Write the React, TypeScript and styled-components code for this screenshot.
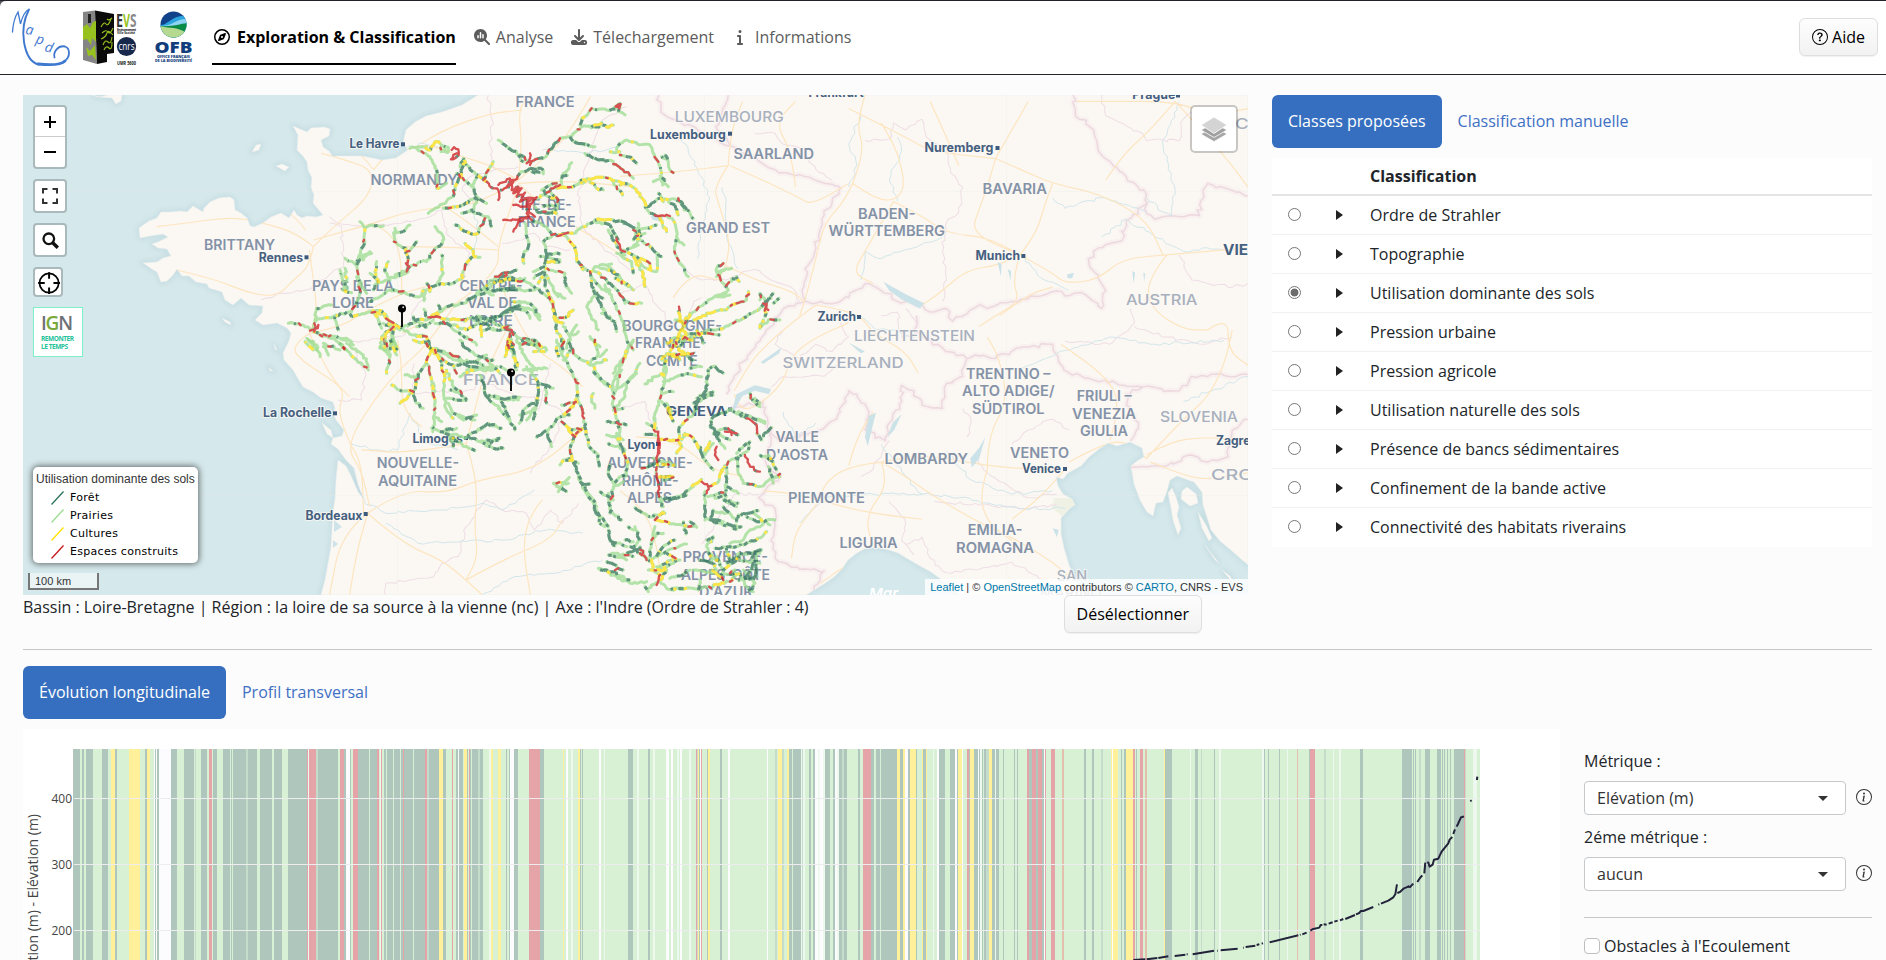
import React from "react";
import styled, { createGlobalStyle } from "styled-components";
import { FaRegCompass, FaMagnifyingGlassChart, FaDownload, FaInfo } from "react-icons/fa6";
import { BsQuestionCircle, BsInfoCircle } from "react-icons/bs";

const GlobalStyle = createGlobalStyle`
  * { box-sizing: border-box; }
  html, body { margin: 0; padding: 0; }
  body {
    height: 960px;
    overflow: hidden;
    background: #fcfcfc;
    color: #212529;
    font: 16px/24px "Open Sans", "Noto Sans", sans-serif;
  }
  svg { display: block; }
`;

/* ---------- page chrome ---------- */

const Page = styled.div`
  height: 960px;
  overflow: hidden;
`;

const Header = styled.header`
  display: flex;
  align-items: flex-start;
  height: 75px;
  padding-right: 8px;
  background: #fff;
  border-top: 1px solid #22222c;
  border-bottom: 1px solid #22262a;
`;

const Nav = styled.nav`
  display: flex;
  gap: 18px;
  margin-top: 18px;
`;

const NavItem = styled.a<{ $active?: boolean; $gap?: number }>`
  display: flex;
  align-items: center;
  gap: ${(p) => p.$gap ?? 7}px;
  height: 46px;
  padding: ${(p) => (p.$active ? "0 0 8px 2px" : "0 0 8px")};
  border-bottom: 2px solid ${(p) => (p.$active ? "#000" : "transparent")};
  color: ${(p) => (p.$active ? "#000" : "#5c5c5c")};
  font-weight: ${(p) => (p.$active ? 700 : 400)};
  letter-spacing: ${(p) => (p.$active ? "-0.02px" : "0")};
  white-space: nowrap;
`;

const Button = styled.button`
  display: flex;
  align-items: center;
  gap: 4px;
  height: 38px;
  padding: 0 12px;
  border: 1px solid #dedede;
  border-radius: 6px;
  background: linear-gradient(#fdfdfd, #f2f2f2);
  box-shadow: 0 1px 1px rgba(0, 0, 0, 0.06);
  color: #000;
  font: inherit;
  white-space: nowrap;
`;

const HelpButton = styled(Button)`
  margin: 17px 0 0 auto;
`;

const Content = styled.main`
  padding: 20px 14px 0 23px;
`;

const TopRow = styled.section`
  display: grid;
  grid-template-columns: 1225px 600px;
  column-gap: 24px;
`;

const SelectionRow = styled.div`
  display: flex;
  justify-content: space-between;
  height: 38px;
  padding-right: 46px;
`;

const Rule = styled.hr<{ $top: number; $bottom: number }>`
  height: 1px;
  margin: ${(p) => p.$top}px 0 ${(p) => p.$bottom}px;
  border: 0;
  background: #c6c7c7;
`;

const Tabs = styled.div`
  display: flex;
  height: 53px;
  margin-bottom: 10px;
`;

const Tab = styled.button<{ $active?: boolean }>`
  padding: 0 16px 2px;
  border: 0;
  border-radius: 6px;
  background: ${(p) => (p.$active ? "#366fc0" : "transparent")};
  color: ${(p) => (p.$active ? "#fff" : "#4070c4")};
  font: inherit;
  white-space: nowrap;
`;

/* ---------- classification table ---------- */

const Table = styled.div`
  background: #fff;
`;

const Row = styled.div<{ $head?: boolean }>`
  display: grid;
  grid-template-columns: 63px 35px 1fr;
  align-items: center;
  height: ${(p) => (p.$head ? 38 : 39)}px;
  padding-bottom: ${(p) => (p.$head ? 0 : 1)}px;
  border-bottom: ${(p) => (p.$head ? "2px solid #e4e4e4" : "1px solid #f1f1f1")};
  font-weight: ${(p) => (p.$head ? 700 : 400)};
  &:last-child { padding-bottom: 2px; border-bottom: 0; }
`;

const Radio = styled.span<{ $on: boolean }>`
  width: 13px;
  height: 13px;
  margin-left: 16px;
  border: 1px solid #767676;
  border-radius: 50%;
  background: ${(p) => (p.$on ? "radial-gradient(circle, #6c6c6c 0 3.6px, #fff 4.3px)" : "#fff")};
`;

const Expander = styled.span`
  width: 0;
  height: 0;
  margin-left: 1px;
  border: solid transparent;
  border-width: 5px 0 5px 7px;
  border-left-color: #222;
`;

/* ---------- map overlay ---------- */

const MapBox = styled.div`
  position: relative;
  height: 500px;
  overflow: hidden;
  background: #d5e8eb;
`;

const Controls = styled.div`
  position: absolute;
  left: 10px;
  top: 10px;
  display: flex;
  flex-direction: column;
  align-items: flex-start;
  gap: 10px;
`;

const Bar = styled.div<{ $w?: number }>`
  width: ${(p) => p.$w ?? 34}px;
  border: 2px solid rgba(0, 0, 0, 0.2);
  border-radius: 4px;
  background: #fff;
  background-clip: padding-box;
`;

const ControlButton = styled.div<{ $h?: number; $line?: boolean }>`
  display: flex;
  align-items: center;
  justify-content: center;
  height: ${(p) => p.$h ?? 30}px;
  border-bottom: ${(p) => (p.$line ? "1px solid #ccc" : "0")};
`;

const Ign = styled.div`
  display: flex;
  flex-direction: column;
  justify-content: center;
  width: 50px;
  height: 50px;
  padding-left: 7px;
  border: 1px solid #7df0c5;
  background: #fff;
  color: #25c39a;
  font: 700 6.5px/8px "Open Sans", sans-serif;
  letter-spacing: -0.45px;
  white-space: nowrap;
`;

const IgnName = styled.span`
  margin-bottom: 2px;
  color: #6d7276;
  font: 600 19px/20px "Open Sans", sans-serif;
  letter-spacing: -1.2px;
  i { color: #78a83a; font-style: normal; }
`;

const Layers = styled.div`
  position: absolute;
  right: 10px;
  top: 10px;
  display: flex;
  align-items: center;
  justify-content: center;
  width: 48px;
  height: 48px;
  border: 2px solid rgba(0, 0, 0, 0.2);
  border-radius: 5px;
  background: #fff;
  background-clip: padding-box;
`;

const Legend = styled.div`
  position: absolute;
  left: 10px;
  top: 372px;
  width: 165px;
  height: 96px;
  padding: 3px 3px;
  border-radius: 5px;
  background: #fff;
  box-shadow: 0 0 6px 1px rgba(0, 0, 0, 0.55);
  color: #333;
  font: 12px/19px "Liberation Sans", sans-serif;
  white-space: nowrap;
`;

const LegendItem = styled.div`
  display: flex;
  align-items: center;
  gap: 6px;
  padding-left: 15px;
  color: #000;
  font: 11px/18px "DejaVu Sans", sans-serif;
  letter-spacing: 0.3px;
`;

const ScaleBar = styled.div`
  position: absolute;
  left: 5px;
  bottom: 5px;
  width: 71px;
  height: 17px;
  padding-left: 5px;
  border: 2px solid #777;
  border-top: 0;
  background: rgba(255, 255, 255, 0.5);
  color: #333;
  font: 11px/16px "Liberation Sans", sans-serif;
`;

const Attribution = styled.div`
  position: absolute;
  right: 0;
  bottom: 0;
  height: 16px;
  padding: 0 5px;
  background: rgba(255, 255, 255, 0.8);
  color: #333;
  font: 11px/16px "Liberation Sans", sans-serif;
  white-space: nowrap;
  a { color: #0078a8; }
`;

/* ---------- lower section ---------- */

const BottomRow = styled.section`
  display: grid;
  grid-template-columns: 1537px 288px;
  column-gap: 24px;
`;

const ChartPanel = styled.div`
  height: 400px;
  background: #fff;
`;

const Side = styled.div`
  padding-top: 20px;
`;

const FieldLabel = styled.div`
  height: 24px;
  margin-bottom: 8px;
`;

const Field = styled.div`
  display: flex;
  align-items: center;
  justify-content: space-between;
  margin-bottom: 10px;
  color: #333;
  > svg { margin-bottom: 2px; }
`;

const Select = styled.div`
  display: flex;
  align-items: center;
  justify-content: space-between;
  width: 262px;
  height: 34px;
  padding: 0 17px 0 12px;
  border: 1px solid #c6c9cc;
  border-radius: 4px;
  background: #fff;
  &::after {
    content: "";
    border: solid transparent;
    border-width: 5px 5px 0;
    border-top-color: #333;
  }
`;

const CheckRow = styled.div`
  display: flex;
  align-items: center;
  gap: 4px;
`;

const Check = styled.span`
  width: 16px;
  height: 16px;
  border: 1px solid #bfbfbf;
  border-radius: 4px;
  background: #fff;
`;

/* ---------- river network ---------- */

type Net = [string, string];

const NORTH: Net[] = [
  ["g", "390,175 440,170"], ["y", "435,172 452,180 465,155 480,160"], ["g", "485,165 483,185 503,188 505,172 492,168 497,185"],
  ["r", "515,180 522,172 535,178 536,195 525,205 513,208 520,195 530,190"], ["g", "410,175 450,200 470,240 470,290"],
  ["m", "540,230 550,205 560,225 590,255 620,275"], ["r", "620,275 640,295 655,300 655,330"],
  ["m", "550,205 545,250 525,290 520,320"], ["g", "520,320 480,345 445,370"], ["g", "470,295 500,280"], ["m", "530,250 580,290 590,320 620,340"],
  ["m", "490,355 550,345 590,320"], ["m", "545,370 580,360 595,325"], ["d", "570,365 605,375 625,380 635,410"],
  ["s", "615,385 595,430 570,430"], ["m", "570,430 525,405"], ["m", "610,270 625,240 640,215"], ["m", "590,260 575,290"],
  ["m", "655,150 690,175"], ["s", "685,175 720,195 750,215"], ["d", "715,195 730,215"], ["r", "750,190 750,225"], ["r", "740,220 765,210"],
  ["r", "720,250 705,270 690,275"], ["d", "720,250 750,235 785,235 790,252"], ["d", "755,245 780,248"],
  ["s", "750,215 790,205 820,170 840,145"], ["g", "840,145 870,140 905,110 960,110"], ["y", "935,112 965,98 980,112 1000,105"],
  ["s", "900,105 905,85 915,80"], ["g", "915,80 935,55 980,60 1020,50"], ["s", "1000,55 1022,42 1015,65"], ["g", "1015,60 1035,75"],
  ["d", "870,140 890,160 945,170"], ["d", "885,155 915,165"],
  ["r", "655,285 690,265 680,290 700,275 695,300 715,290 700,310 725,295 710,320 735,308 720,335 745,325 745,345"],
  ["r", "660,300 690,290"], ["s", "755,330 790,315 820,295 840,285"], ["r", "735,325 770,322 750,345"], ["r", "755,325 740,350 755,340"],
  ["r", "700,345 730,350 750,350 740,370 755,390"], ["r", "740,355 765,380"], ["r", "670,390 740,385"], ["r", "700,425 715,395 740,380"],
  ["d", "765,350 770,365 800,370 830,360"], ["m", "830,360 835,330 810,305"], ["d", "790,350 830,345"], ["m", "790,365 830,370"],
  ["m", "785,300 830,280"], ["y", "830,295 880,290"], ["m", "880,290 920,270"], ["y", "900,272 960,262 1020,275 1050,285 1080,310 1100,350"],
  ["m", "790,300 805,320 835,330"], ["d", "840,285 850,250 863,240 875,218"], ["d", "845,258 862,256"],
  ["m", "930,275 950,295 970,300"], ["m", "1000,275 1010,290 1028,315"], ["y", "1020,285 1035,280"],
  ["d", "1095,350 1110,370 1130,378"], ["d", "1100,350 1140,325"], ["m", "1140,325 1190,330 1215,355"], ["g", "1205,345 1240,385"],
  ["r", "1125,376 1170,378"], ["g", "1160,375 1185,400 1190,440 1185,490 1210,530 1225,560"], ["m", "1165,335 1185,345 1195,375"],
  ["y", "1140,380 1160,425"], ["g", "1190,440 1212,465"], ["m", "1135,310 1150,335"], ["s", "1195,325 1220,360"],
  ["d", "915,190 940,205 1000,215"], ["s", "1000,222 1030,240 1060,265"], ["m", "990,185 1020,185"], ["s", "1020,195 1050,200 1070,220"],
  ["m", "1010,180 1020,160 1040,150 1070,158"], ["g", "1070,160 1110,165 1120,190 1135,215 1145,250 1145,275 1165,290"],
  ["g", "1145,200 1165,215 1170,240 1180,248"], ["m", "1155,195 1165,215"], ["g", "1120,275 1145,265"], ["d", "1140,258 1155,270 1148,285"],
  ["d", "755,390 800,410 815,435"], ["r", "815,435 845,435"], ["m", "845,432 880,430 910,410 950,390"], ["y", "950,390 1000,390"], ["d", "1000,390 1040,400"],
  ["d", "950,398 990,405 1015,450"], ["d", "1030,400 1070,415 1065,445"], ["m", "1060,420 1080,430 1060,450"],
  ["g", "1075,420 1110,415 1130,405"], ["m", "1065,440 1110,470 1145,500"], ["g", "1060,470 1078,445"], ["m", "1075,400 1080,440 1095,430"],
  ["r", "1010,445 1022,480 1035,485"], ["m", "1030,480 1070,500 1090,530 1125,545"], ["g", "1040,480 1075,465"], ["m", "1010,490 1055,515 1060,550"],
  ["y", "1060,500 1090,550 1095,590"], ["g", "1130,490 1130,545"], ["y", "1080,505 1110,520 1112,540"], ["m", "985,420 1010,470 1035,495"],
  ["y", "835,435 860,440 885,470 890,510 910,540"], ["s", "890,515 925,542"], ["g", "930,545 960,525 995,522"], ["m", "960,535 990,540 1020,560 1025,580"],
  ["m", "1005,565 1040,580 1060,600"], ["g", "985,530 1005,550 1045,590"], ["s", "930,545 935,590 942,605"], ["d", "940,600 955,630 975,670"],
  ["d", "970,655 985,685 1005,695 1010,725"], ["d", "965,670 990,680"], ["m", "945,545 980,570 1010,600 1030,625 1035,640"], ["m", "1020,615 1050,640 1085,640"],
  ["g", "975,585 995,615 1010,650"], ["g", "935,560 960,590 980,605"], ["d", "940,605 970,625"], ["g", "940,620 920,650 940,690 955,720"],
  ["d", "820,435 790,455 800,490 795,530"], ["m", "795,535 830,545 855,550"], ["d", "855,550 858,590 875,610"], ["d", "800,495 840,492"],
  ["m", "800,515 840,515"], ["d", "795,530 760,545"], ["d", "790,545 762,565"], ["d", "795,545 795,590"], ["m", "800,555 820,600 835,620"],
  ["g", "820,600 855,625"], ["d", "780,500 840,510"], ["d", "735,400 740,440 745,470 732,490 728,505"], ["y", "730,505 732,520"], ["m", "790,560 775,580"],
  ["g", "240,395 255,415 250,455"], ["m", "255,455 230,515"], ["g", "230,515 235,560 240,610"], ["g", "255,415 275,405 310,408"], ["g", "195,505 230,525 250,495 275,490"],
  ["g", "195,535 200,575 188,600 215,608"], ["g", "270,485 250,510"], ["g", "345,415 342,455 355,465 378,475"], ["y", "378,475 385,530"],
  ["r", "378,520 388,530 380,545 385,530"], ["g", "385,535 420,515 440,515 455,490"], ["s", "455,490 485,460"], ["g", "488,460 490,440 475,425 465,410"],
  ["g", "345,430 370,425 390,405"], ["g", "385,545 350,560 320,570 290,580 280,600"], ["m", "290,515 285,545 295,580"], ["g", "325,515 315,545 330,570"],
  ["g", "410,455 395,475 380,485"], ["g", "380,540 345,555"], ["g", "270,550 290,570"], ["g", "230,560 260,610"], ["g", "180,540 200,600"],
  ["g", "485,495 490,550 470,585 440,600"], ["g", "430,600 420,620 380,612 330,600 300,620 270,635"], ["s", "330,600 375,608"],
  ["m", "440,600 470,585 520,580 550,560"], ["m", "545,560 560,520 580,500"], ["y", "580,500 580,480 555,460"], ["m", "580,500 600,502"],
  ["s", "440,580 450,605"], ["g", "435,600 432,632"], ["g", "240,610 230,635 215,665"],
  ["g", "25,700 70,705 100,720"], ["r", "90,722 108,718 103,700"], ["g", "100,715 110,690 160,680 210,665 215,680 270,665"], ["r", "103,725 115,705"],
  ["g", "105,690 110,655 155,645"], ["y", "275,663 305,662 325,690 345,708"], ["y", "275,668 310,672 330,695 350,712"], ["m", "345,705 360,715 400,700"],
  ["m", "400,690 440,690"], ["r", "445,682 480,682"], ["y", "470,680 510,690 560,690"], ["m", "545,690 600,680 640,700 690,715"], ["d", "385,705 410,690 440,712"],
  ["d", "410,710 440,705 460,690"], ["d", "400,680 415,695"], ["d", "432,658 438,680"], ["m", "440,690 480,660 475,645"], ["m", "465,680 500,650 550,640 600,610"],
  ["m", "590,610 640,570 680,555 720,570"], ["s", "645,560 710,540"], ["m", "640,580 680,565 720,575 735,565"], ["m", "720,565 750,580 790,610 810,625"],
  ["m", "810,620 825,680 830,720 850,760"], ["y", "800,600 820,640 825,690 850,700"], ["y", "825,690 860,680 880,660"], ["d", "630,605 700,590 730,602 765,600"],
  ["d", "600,615 640,600 680,602 720,595"], ["m", "610,600 650,575 700,570"], ["d", "580,690 650,680 700,660 720,640"], ["g", "700,635 750,640 780,680"],
  ["d", "680,660 700,655 740,665 750,685"], ["d", "690,660 720,645"], ["g", "720,650 760,660 780,690"], ["d", "640,690 700,650"], ["d", "560,630 620,605 640,615"],
  ["y", "345,705 315,735 315,780"], ["m", "340,715 305,740 300,775"], ["m", "325,700 340,745 350,780"], ["m", "345,715 330,780"],
  ["g", "100,725 160,745 200,780"], ["m", "80,745 95,755 110,780"], ["g", "120,735 200,745 220,765"], ["g", "170,740 215,755"], ["g", "165,680 175,720"], ["g", "285,670 300,705"],
  ["g", "295,690 305,715"], ["m", "310,700 360,720"], ["g", "360,715 400,735 440,740"], ["y", "410,740 440,740 455,780"], ["d", "465,700 500,700 530,725 560,745"],
  ["m", "490,695 560,720 600,700"], ["d", "600,690 640,720 690,720"], ["m", "600,720 640,715"], ["g", "560,740 590,765"], ["y", "600,700 605,740"],
  ["r", "680,718 695,720 700,735"], ["m", "690,720 700,780"], ["d", "690,720 720,745 735,760"], ["s", "730,745 770,755"], ["m", "720,760 780,765"],
  ["y", "690,730 680,780"], ["g", "890,705 870,740 860,775"], ["g", "880,735 895,725"], ["g", "930,740 960,770"], ["g", "850,710 870,740"],
  ["r", "1197,650 1197,668"], ["y", "1195,665 1200,690 1215,710 1195,735 1185,770"], ["y", "1185,690 1215,700 1230,670"], ["y", "1200,720 1220,730 1205,750"],
  ["g", "1215,690 1250,660 1285,630 1330,610"], ["g", "1330,615 1345,600 1325,575 1315,555 1330,540"], ["g", "1310,560 1310,535 1330,520"], ["g", "1315,545 1355,535"],
  ["m", "1335,590 1370,560 1378,575"], ["g", "1310,620 1350,615"], ["m", "1190,755 1240,740 1290,720 1330,715"], ["m", "1330,715 1400,680 1450,650"], ["d", "1445,650 1480,610"],
  ["y", "1240,690 1290,670 1330,660 1370,640"], ["m", "1370,640 1400,630 1405,605"], ["s", "1440,615 1460,640 1455,680"], ["r", "1450,640 1465,660"], ["m", "1450,690 1440,715"],
  ["g", "1500,690 1465,690 1440,710"], ["d", "1480,640 1497,625"], ["s", "1440,630 1440,610"], ["g", "1030,700 1040,745 1060,780"], ["m", "1215,735 1280,730 1320,735"],
  ["y", "1160,760 1200,735 1240,750"], ["g", "1005,640 1025,690 1035,720"], ["y", "1250,720 1270,760"],
];

const SOUTH: Net[] = [
  ["m", "440,60 435,75 410,110"], ["s", "415,100 400,160"], ["d", "375,105 415,112"], ["m", "335,135 360,150 400,155"], ["y", "360,190 400,158"],
  ["d", "400,160 410,190 430,205"], ["y", "400,0 440,10 455,30 440,60"], ["m", "440,60 455,120 465,180"], ["g", "460,130 465,220 458,275"], ["d", "460,230 485,245"],
  ["y", "455,25 480,60 495,110"], ["m", "465,30 490,60 520,75 530,100"], ["g", "495,100 490,150 500,210 520,235"], ["d", "505,190 520,220 550,240 590,225"],
  ["g", "500,90 520,140 545,160"], ["d", "510,150 545,165 560,180"], ["d", "500,175 560,180"], ["d", "530,225 585,240"], ["m", "460,30 510,40 560,65"],
  ["g", "465,25 530,60 600,70"], ["d", "530,75 580,65 620,45"], ["d", "540,70 600,85"], ["d", "560,60 610,75"], ["g", "560,90 600,85 650,80"], ["d", "540,0 560,25 600,50 640,60"],
  ["g", "620,60 660,100"], ["g", "540,110 570,90 640,90"], ["g", "455,265 500,280 530,300"], ["d", "480,275 530,265"], ["g", "500,265 520,320"], ["g", "510,295 560,320 585,332"],
  ["d", "555,295 600,265 620,255 665,265"], ["d", "565,290 600,305 640,325 670,325"], ["d", "600,305 660,295"], ["d", "620,310 655,300"], ["m", "495,280 560,292"], ["d", "600,270 625,250 650,260"],
  ["d", "600,105 620,170 640,190 660,205"], ["d", "625,165 660,175 690,240"], ["d", "655,205 690,240 705,270"], ["g", "630,170 715,180"], ["d", "660,175 720,172"],
  ["m", "690,0 690,20 700,40 710,90"], ["y", "690,10 675,50"], ["m", "690,10 705,50 712,80"], ["g", "710,0 740,60 770,90"], ["g", "740,80 775,130"], ["s", "775,130 772,185"],
  ["d", "772,185 760,240"], ["g", "740,0 790,35"], ["m", "760,0 800,30"], ["y", "760,35 795,35"], ["g", "730,90 800,85"], ["d", "775,130 820,145"], ["g", "800,135 800,190"],
  ["d", "775,180 730,210 718,250"], ["g", "770,190 740,240"], ["g", "720,225 750,215"], ["g", "660,80 700,95"],
  ["d", "865,80 890,120"], ["r", "885,118 895,130"], ["m", "892,130 890,170 910,220"], ["r", "908,218 912,235"], ["m", "912,235 918,270 925,310"], ["d", "925,315 955,345 958,380"],
  ["g", "830,0 850,50 868,82"], ["m", "850,0 845,40"], ["m", "835,50 830,20"], ["m", "870,30 850,60"], ["m", "865,0 880,40"], ["g", "875,35 905,60 935,75 960,120 1000,145"],
  ["m", "940,95 965,120 1000,145"], ["g", "1000,145 1005,110 1020,80"], ["y", "895,170 880,200 850,225"], ["d", "870,225 840,232 805,270 770,292"], ["m", "845,195 895,185"],
  ["d", "800,275 815,320"], ["y", "845,245 880,270 910,265"], ["y", "865,265 885,290 905,265"], ["m", "885,285 870,330 880,365"], ["s", "840,375 850,360 875,360"], ["d", "865,355 895,370"],
  ["d", "880,365 905,430 940,480 960,530 985,560"], ["g", "895,410 925,470 950,500"], ["d", "940,490 960,550 975,560"], ["d", "985,570 990,600 1040,620"], ["g", "820,430 865,430"],
  ["g", "835,455 850,430 868,412"], ["d", "830,440 860,455"], ["d", "905,430 930,432"], ["g", "820,430 850,450"],
  ["g", "1000,145 1000,200 1015,250 1020,290"], ["m", "1010,280 1030,340"], ["g", "1030,330 1045,370 1035,410"], ["g", "1005,205 1035,170 1040,130 1070,100"], ["g", "1000,160 1050,120 1080,70"],
  ["g", "1060,0 1040,30 1020,80"], ["g", "1060,0 1040,40 1000,100"], ["s", "980,245 1040,255"], ["g", "980,285 1030,300"], ["g", "985,310 1035,330"], ["g", "940,160 935,180 945,205"],
  ["g", "945,0 955,40 930,70"], ["g", "930,75 980,60"], ["g", "960,50 980,30"], ["g", "1000,210 1030,205"], ["g", "1010,140 1025,90"], ["d", "1015,245 1020,270"],
  ["d", "1035,405 1000,430 985,400 990,375"], ["g", "1030,425 1000,440 990,510"], ["d", "990,510 1025,540"], ["d", "960,455 1000,480"], ["d", "985,460 990,520"],
  ["m", "1160,60 1150,110"], ["g", "1145,50 1160,90 1145,160 1130,210 1122,240"], ["y", "1125,235 1122,270"], ["g", "1145,160 1180,155"], ["g", "1150,125 1220,100 1265,110"], ["g", "1150,100 1125,110 1095,132"],
  ["y", "1160,190 1180,245"], ["g", "1145,185 1175,215"], ["y", "1145,60 1160,40 1190,45 1240,40"], ["y", "1180,10 1170,40 1200,60"], ["g", "1230,85 1265,80"], ["m", "1215,0 1195,30 1240,60"],
  ["r", "1122,270 1135,275 1140,310 1130,360"], ["r", "1135,295 1138,340"], ["m", "1130,360 1128,400"], ["r", "1130,400 1138,470"], ["m", "1138,470 1145,500"], ["y", "1150,515 1125,540"],
  ["y", "1140,298 1195,300 1205,320 1190,340"], ["y", "1205,300 1215,280"], ["m", "1210,285 1235,290 1260,330"], ["d", "1260,320 1270,355 1300,390"], ["m", "1195,300 1200,260 1240,220"],
  ["d", "1240,220 1250,190 1280,150 1280,110"], ["d", "1250,210 1260,165"], ["d", "1280,120 1290,85 1305,78"], ["d", "1305,80 1330,100"], ["d", "1240,190 1300,165"], ["d", "1250,175 1300,155"],
  ["d", "1300,230 1290,260 1320,280"], ["d", "1300,280 1340,265 1375,285"], ["r", "1335,275 1370,280"], ["d", "1310,280 1350,300"], ["r", "1345,265 1355,285"], ["d", "1300,230 1355,208 1400,235"],
  ["r", "1400,235 1430,255 1432,280"], ["d", "1375,215 1455,250"], ["d", "1425,235 1455,245"], ["s", "1410,160 1412,175"], ["d", "1410,172 1440,200"], ["d", "1425,175 1440,190"], ["d", "1430,280 1445,300"],
  ["d", "1450,290 1475,262"], ["d", "1300,280 1335,325"], ["y", "1270,340 1290,305"], ["r", "1310,320 1305,345 1315,360"], ["m", "1275,345 1300,310"], ["d", "1370,340 1400,310"],
  ["d", "1165,478 1200,470 1240,440"], ["y", "1235,440 1265,418"], ["r", "1265,425 1285,440 1280,460"], ["y", "1285,440 1310,430 1330,385"], ["m", "1325,390 1345,365 1385,345"],
  ["m", "1385,345 1400,335 1410,305"], ["d", "1275,455 1275,540"], ["d", "1340,380 1340,430 1335,480 1370,500"], ["d", "1330,480 1375,490"], ["d", "1340,440 1375,460"], ["g", "1375,350 1375,400 1390,430"],
  ["s", "1390,430 1440,440"], ["g", "1440,440 1460,425 1500,402"], ["r", "1395,345 1410,380 1440,395"], ["d", "1440,345 1480,365"], ["m", "1465,345 1490,390"], ["g", "1465,380 1480,430"], ["g", "1480,415 1500,410"],
  ["m", "1285,470 1330,458"], ["d", "1305,475 1330,462"], ["g", "1120,355 1175,372"], ["y", "1145,372 1185,375"], ["y", "1135,412 1180,410"], ["s", "1150,420 1180,412"], ["s", "1085,385 1130,370"], ["d", "1095,283 1130,288"],
  ["g", "1100,250 1130,265"], ["g", "1135,460 1150,500"], ["d", "1140,480 1220,465"],
  ["d", "1300,510 1290,540 1330,555 1385,560"], ["d", "1280,535 1330,545"], ["g", "1300,515 1350,520 1370,540"], ["d", "1370,545 1375,525 1435,512"], ["d", "1330,500 1350,520"], ["d", "1400,530 1440,545"],
  ["g", "1410,570 1440,560 1460,540 1485,540"], ["d", "1340,550 1370,568"], ["g", "1420,520 1470,555"],
  ["y", "1125,540 1170,550"], ["m", "1170,552 1240,560"], ["d", "1210,545 1218,582"], ["d", "1230,545 1250,562"], ["d", "1065,503 1110,530"], ["y", "1140,525 1155,520"], ["g", "1110,530 1130,525"],
  ["m", "1125,560 1115,600 1110,650"], ["y", "1110,650 1120,690 1140,705"], ["r", "1140,705 1130,735"], ["g", "1135,725 1105,745"], ["m", "1115,610 1130,580 1150,580"], ["m", "1130,650 1150,620"],
  ["m", "1150,620 1185,600"], ["g", "1120,655 1165,630 1220,612"], ["m", "1130,680 1180,658"], ["g", "1135,690 1200,660"], ["g", "1140,725 1165,748 1260,745 1300,740"], ["m", "1165,748 1240,745"],
  ["m", "1140,720 1160,690"], ["d", "1170,715 1215,700 1230,690"], ["m", "1100,660 1080,640"], ["y", "1105,690 1160,690"], ["y", "1160,640 1190,660"], ["s", "1080,620 1100,660"],
  ["d", "1065,560 1080,600 1060,620"], ["d", "1035,600 1060,605"], ["d", "1050,620 1080,640 1110,665"], ["d", "990,600 1005,618"], ["d", "1045,560 1060,570"], ["d", "985,645 1040,660"],
  ["d", "955,685 1000,695 1050,720"], ["g", "960,685 1010,710 1050,730 1100,725"], ["r", "1005,690 1015,685"], ["d", "980,665 1030,690"], ["g", "995,640 1060,650"], ["d", "1095,740 1105,755"], ["d", "1040,640 1080,625"],
  ["m", "1300,590 1280,620 1295,660 1310,690"], ["d", "1305,625 1370,620 1430,600"], ["g", "1430,600 1460,575"], ["d", "1400,640 1445,630"], ["y", "1300,735 1350,725 1370,700"],
  ["m", "1290,640 1320,670"], ["d", "1310,650 1330,690 1320,710"], ["m", "1330,690 1370,660 1380,640"], ["d", "1340,670 1380,640 1440,640"], ["d", "1260,660 1300,670"], ["m", "1320,705 1380,700"],
  ["d", "1380,700 1400,740 1420,755"], ["d", "1420,640 1415,690 1390,720"], ["g", "1350,610 1390,600 1410,570"], ["g", "1240,690 1300,700"], ["s", "1350,700 1365,690"], ["d", "1430,640 1430,690 1415,750"],
  ["d", "1380,660 1440,670"], ["d", "1375,720 1430,710"], ["y", "1295,690 1330,720"], ["d", "1280,600 1300,595"], ["d", "1260,720 1255,750"], ["m", "1340,625 1350,660"], ["d", "1390,690 1425,730"],
  ["g", "85,0 110,15 120,50"], ["m", "75,5 100,30"], ["g", "130,10 180,30"], ["g", "180,10 200,30 230,60 265,90"], ["g", "200,10 250,45 265,80"], ["m", "320,10 330,50 320,100"], ["m", "300,20 325,45"],
  ["y", "315,0 320,15"], ["m", "330,0 350,45"], ["g", "130,20 145,45"], ["d", "340,0 350,30"],
];

const MIX: Record<string, string> = {
  g: "gggggggggggdgggyggggdggrg",
  d: "ddgdgddgdgg",
  y: "yyyygyydyygyr",
  r: "rrrrrrrrrrdr",
  m: "ggdgygdgrygdgygd",
  s: "drdgrdgdy",
};
const TONE: Record<string, string> = { d: "#2d7358", g: "#9bdd90", y: "#ffdf10", r: "#cb181d" };

// Splits every reach into short sections, each with its dominant land use.
function sections(net: Net[], seed: number) {
  let s = seed;
  const rnd = () => {
    s = (s + 0x6d2b79f5) | 0;
    let t = Math.imul(s ^ (s >>> 15), 1 | s);
    t = (t + Math.imul(t ^ (t >>> 7), 61 | t)) ^ t;
    return ((t ^ (t >>> 14)) >>> 0) / 4294967296;
  };
  const out: Record<string, string> = { course: "", d: "", y: "", r: "", g: "" };
  for (const [mix, text] of net) {
    const pts = text.trim().split(/\s+/).map((p) => p.split(",").map(Number));
    let [px, py] = pts[0];
    if (mix !== "r") out.course += `M${px} ${py}`;
    for (let i = 1; i < pts.length; i++) {
      const [ax, ay] = pts[i - 1];
      const [bx, by] = pts[i];
      const n = Math.max(1, Math.round(Math.hypot(bx - ax, by - ay) / 8));
      for (let k = 1; k <= n; k++) {
        const j = k === n ? 0 : 7;
        const x = ax + ((bx - ax) * k) / n + (rnd() - 0.5) * j;
        const y = ay + ((by - ay) * k) / n + (rnd() - 0.5) * j;
        const c = MIX[mix][Math.floor(rnd() * MIX[mix].length)];
        if (mix !== "r") out.course += `L${x.toFixed(1)} ${y.toFixed(1)}`;
        out[c] += `M${px.toFixed(1)} ${py.toFixed(1)}L${x.toFixed(1)} ${y.toFixed(1)}`;
        px = x;
        py = y;
      }
    }
  }
  return out;
}

function Rivers({ net, seed }: { net: Net[]; seed: number }) {
  const d = sections(net, seed);
  return (
    <g fill="none" strokeWidth="9" strokeLinejoin="round" opacity="0.75">
      <path d={d.course} stroke={TONE.g} strokeLinecap="round" />
      {["d", "y", "r"].map((c) => (
        <path key={c} d={d[c]} stroke={TONE[c]} strokeLinecap={c === "r" ? "round" : "butt"} strokeWidth={c === "r" ? 7 : 9} />
      ))}
    </g>
  );
}

/* ---------- base map ---------- */

const LAND =
  "M478,95 L462,105 442,112 426,116 415,122 406,130 403,143 408,150 396,158 382,160 362,156 337,156 333,157 329,151 323,147 321,140 329,136 330,129 324,127 311,128 307,132 293,126 298,135 297,150 303,156 307,162 308,170 312,178 311,187 314,195 313,203 323,215 316,217 307,216 302,218 297,215 294,210 289,218 281,213 271,217 263,223 254,227 250,226 247,218 241,213 235,210 234,200 230,197 219,198 210,202 204,208 203,212 193,206 187,212 181,211 171,212 161,212 157,218 149,221 139,228 140,238 150,236 163,234 168,237 158,242 152,244 158,248 167,249 171,256 163,258 157,262 143,263 152,269 157,272 161,282 167,281 173,275 177,269 182,276 189,276 196,282 207,284 209,288 216,290 222,292 225,300 233,305 241,298 249,305 263,306 262,313 255,320 263,325 277,323 287,328 291,333 289,341 283,353 284,360 293,370 303,387 313,392 321,398 333,402 335,408 333,413 336,420 344,430 342,436 333,438 331,444 338,449 346,460 354,468 358,484 361,492 366,502 358,492 352,478 346,466 338,460 336,480 335,498 333,513 331,547 325,580 321,595 L806,595 824,584 834,577 842,569 848,560 857,553 866,548 875,547 889,550 898,553 908,559 920,566 931,572 942,580 955,590 960,595 L1085,595 1077,583 1069,565 1064,548 1061,534 1061,518 1070,508 1075,505 1072,499 1063,494 1058,486 1056,477 1063,479 1068,473 1081,466 1089,457 1099,449 1108,443 1117,446 1130,442 1142,448 1144,457 1137,461 1131,466 1134,484 1140,500 1147,512 1153,516 1156,503 1163,502 1167,491 1170,480 1177,476 1188,480 1194,482 1202,492 1203,505 1206,514 1211,530 1220,541 1232,551 1241,559 1248,565 L1248,95Z";

const AQUA_ISLANDS =
  "M92,95 100,97 108,95 122,95 121,101 116,104 112,98 98,97Z M252,152 256,145 261,144 259,150Z M276,166 282,164 289,167 285,171Z M222,318 230,322 231,325 225,322Z M274,344 277,350 275,349Z M322,423 331,430 333,438 327,434Z M269,368 273,371 270,371Z M1168,493 1172,488 1176,497 1179,507 1177,515 1181,528 1178,535 1173,520 1171,508Z M1182,491 1187,487 1196,494 1198,503 1190,506 1181,499Z M1198,512 1206,525 1212,538 1209,541 1202,528Z M1205,545 1211,553 1219,563 1215,560Z M1222,570 1230,576 1234,584Z";

const LAKES =
  "275,925 285,880 330,855 370,865 365,880 330,870 300,885 280,925|645,565 700,600 745,625 735,640 690,615 660,590|895,1000 880,1060 862,1085 858,1060 880,1030|345,790 395,750 390,765 350,795|600,1000 610,940 627,932 607,1025|690,935 672,980 655,1000 668,960|925,510 935,515 933,550|950,530 958,535 957,562|1095,545 1112,540 1108,555 1097,555|1255,535 1262,540 1258,570|1282,540 1287,542 1284,565|1060,1255 1075,1260 1070,1280|75,380 110,380 100,395 80,392|560,735 600,760 590,765";

const BORDERS_WIDE = [
  "95,42 100,90 130,110 190,140 240,170 270,185 330,215 350,235 390,260 440,265 490,285 540,300",
  "265,42 250,90 235,130 260,160 270,185",
  "540,300 520,340 500,380 490,420 480,470 460,520 450,580 455,620",
  "400,640 455,620 500,625 540,620 575,590 600,570 640,590 680,620 740,630 760,650 800,640 815,675 850,655 880,630 900,640 960,620 1030,605 1070,590 1090,605 1130,595 1150,610 1180,640 1190,590 1150,520 1160,480 1230,450 1240,395 1290,345",
  "1110,42 1115,90 1160,140 1180,210 1240,270 1290,320 1285,360 1310,390 1350,380 1420,380 1420,350 1440,290 1538,325",
  "260,880 265,860 300,790 370,690 400,640", "270,920 350,900 360,970 390,1010 420,1000 480,990 530,950 560,870 580,880 610,930 600,980 650,1010 660,960 690,900 690,855 720,870 740,910 790,920 800,850 840,830 850,780 790,750 720,700 725,660",
  "850,780 870,770 920,780 980,750 1060,740 1075,790 1100,820 1160,840 1280,860 1370,870 1400,830 1538,825",
  "1280,860 1240,880 1240,910 1270,960 1250,1010", "1250,1085 1340,1080 1400,1050 1440,1070 1490,1055 1500,980 1538,950",
  "370,970 360,1080 390,1110 340,1170 380,1200 380,1250 370,1290 380,1340 440,1370 500,1375 470,1440",
];
const BORDERS_THIN = [
  "330,150 380,150 400,180 440,190 480,250 520,280", "600,170 660,165 670,120 700,140 740,110 750,160 800,200 810,260 840,300 830,370 800,400 790,480 800,560 790,620",
  "0,600 60,570 80,620 110,650 110,690 170,670 180,620 200,610", "160,530 200,560 260,560 330,530 370,560 420,580 440,620",
  "1180,42 1190,100 1280,150 1290,170 1370,170 1380,110 1400,90", "1370,490 1400,560 1440,570 1500,580 1538,570", "1090,730 1200,740 1260,680 1250,640", "1260,690 1340,720 1430,740 1500,720",
  "590,1110 620,1090 660,1010", "660,1180 700,1240 690,1290 720,1330", "850,1000 860,960 840,920", "870,1050 900,1100 1000,1170 1070,1160", "770,1180 880,1190 990,1200 1070,1190", "700,1300 740,1280 760,1340 800,1380 880,1370 960,1350 1040,1400",
  "960,1020 1000,980 1060,950 1100,980", "540,680 560,720 520,760 480,740 440,780 380,740 400,700", "700,640 730,680 720,720 690,720 680,650 640,660", "370,860 400,830 500,830 540,790", "340,1160 280,1160 200,1300", "0,920 60,900 80,980",
];
const BORDERS_WEST = [
  "1215,45 1225,120 1220,200 1230,270 1290,260", "1230,270 1170,290 1150,330 1180,370", "820,410 840,430 900,440 1000,430 1070,410 1100,390", "820,430 850,440 855,560 800,600 760,630 700,640 650,660",
  "840,960 900,960 910,880 870,790 990,770 1010,760 1030,690 1060,650", "1100,390 1110,460 1170,520 1150,610", "1030,850 1030,940 1180,930 1200,900 1290,950 1330,950 1340,990 1370,850",
  "1250,490 1300,480 1330,460 1360,500 1420,510", "1320,1180 1380,1080 1400,1000 1350,960", "960,1545 960,1510 1020,1500 1080,1490 1100,1450 1140,1430 1160,1340 1210,1260 1250,1290 1310,1300 1330,1350 1370,1290 1400,1330 1440,1270",
  "1560,80 1500,120 1480,180 1440,330 1450,440 1500,500 1568,570",
];
const ROADS_WEST = [
  "1290,300 1230,260 1150,230 1060,190 1010,210", "1290,300 1300,200 1290,95 1310,50", "1290,300 1390,200 1430,130 1470,50", "1290,300 1200,370 1100,380 1000,400 930,430 780,480", "1290,320 1260,420 1240,500 1240,570 1130,680 1000,760",
  "780,500 770,560 730,600 690,650 620,640 540,600 440,570", "780,500 740,460 660,430 580,410 460,430 390,440", "780,500 830,440 920,350 930,270 860,240 800,220", "770,510 780,600 790,700 770,760", "770,760 850,740 900,700 1000,640 1060,620",
  "770,760 720,800 760,850 800,880 860,930 840,990 870,1090 900,1150 905,1300", "770,760 820,890 870,950", "1130,680 1060,800 1000,860 930,960 860,1100 900,1170 920,1280", "915,1300 850,1360 820,1545", "915,1300 890,1400 870,1545", "915,1300 1000,1230 1110,1240 1190,1200 1330,1170 1450,1050",
  "915,1300 1000,1390 1100,1440 1160,1500 1200,1545", "1160,1500 1250,1440 1370,1380 1400,1320", "1160,1090 1180,1000 1200,900 1240,800 1280,700 1240,600", "1160,1090 1190,1200 1180,1340 1190,1430 1160,1500", "1160,1090 1020,1120 900,1110", "1280,700 1320,800 1400,860 1450,920",
  "930,270 960,220 1010,210", "930,270 900,220 850,200", "1290,310 1350,380 1460,460 1568,540", "1290,310 1400,300 1568,320", "1050,190 1100,150 1220,100 1300,90", "760,450 720,380 600,370", "1000,640 1000,540 980,470 930,430", "1240,500 1170,430 1120,390",
  "1000,500 1100,500 1240,510", "1350,1260 1320,1300 1300,1400 1320,1545", "1050,1040 1000,1000 1000,860 990,780",
];
const ROADS_EAST = [
  "265,240 230,300 240,340 270,450 260,520 240,560", "265,240 270,150 300,60", "270,240 350,280 440,330 470,350 560,290", "0,270 120,260 265,240", "570,290 600,200 580,130 600,42", "570,290 550,340 500,400 480,500 455,610 440,660", "570,290 620,330 670,340 700,300 680,200 640,120",
  "670,340 640,400 600,480 570,540 620,570", "670,340 740,380 800,430 900,440 980,490", "560,80 700,160 760,200 920,220", "920,220 960,140 1000,60", "920,220 1000,260 1060,290 1180,320 1290,390 1330,490", "920,220 900,300 880,360 860,430 980,490", "980,490 1020,430 1040,350 1060,290",
  "980,490 1060,540 1090,570 1170,560 1230,500 1340,490 1538,470", "980,490 960,560 980,620 920,660 880,690", "980,490 930,520 850,530 780,600 740,630", "480,630 530,640 590,660 620,710 700,760 730,820", "480,630 420,680 360,740 320,790 280,870", "280,880 290,920 330,920 400,850 420,770 480,720 560,680",
  "640,1070 560,1080 500,1130 490,1180 430,1260 420,1340", "640,1070 700,1110 760,1160 880,1240 960,1280 1060,1350 1110,1400", "640,1070 720,1050 800,1060 900,1080 1000,1090 1080,1090", "640,1070 660,1130 600,1220 620,1310", "500,1180 560,1200 660,1220 740,1230", "620,1310 540,1370 490,1410", "620,1310 700,1340 780,1400",
  "900,1090 900,1000 950,900 930,780 900,720", "900,1090 880,1160 900,1240 960,1290", "1090,1090 1040,1160 960,1230", "1100,1070 1180,1020 1240,1010 1290,1060", "1290,1060 1370,960 1440,890 1480,800 1500,700", "1290,1050 1350,1010 1440,1000 1538,1010", "1200,1010 1230,900 1180,820 1080,740",
  "1120,60 1200,60 1360,60 1450,100 1538,80", "1360,60 1300,140 1240,200 1190,280", "1360,60 1440,160 1500,240 1538,300", "1340,490 1290,560 1300,640 1380,700 1440,700", "1440,700 1490,660 1490,760 1540,800", "40,1000 130,1000 220,1090 300,1110", "0,1150 60,1200 90,1300 100,1400", "500,1180 440,1160 350,1150",
  "1538,1100 1450,1120 1390,1110 1300,1070", "430,300 420,200 380,120 430,60", "260,520 330,560 420,590 450,620", "130,610 170,540 240,560", "930,660 1000,600 1060,580", "560,1080 580,1000 620,930", "760,60 800,160 830,240",
];
const STREAMS_EAST = [
  "150,160 190,250 220,330 200,420 190,500", "250,300 260,340 255,420 280,500 290,530", "560,300 580,240 560,180 590,100", "680,340 660,280 690,200 680,160", "590,560 600,480 640,500 720,470 790,440", "1290,330 1330,370 1350,380 1360,320 1330,180 1370,60", "1090,360 1180,330 1290,370", "1060,330 1090,360",
  "1180,440 1240,390 1380,480 1440,470 1538,480", "440,1240 500,1170 600,1160 740,1160 830,1170 980,1200 1090,1200", "800,1040 860,1120 960,1160 1060,1150", "640,1020 700,1110 740,1160", "880,820 980,810 1080,760 1200,720 1300,740 1480,730", "590,660 630,700 670,700 720,720", "1540,830 1450,870 1380,900", "980,490 1040,560 1100,590", "400,930 430,1000 480,960",
];
const STREAMS_WEST = [
  "905,1265 960,1300 1100,1290 1200,1270 1250,1290 1330,1230", "960,1330 1040,1390 1160,1385 1260,1380 1360,1350 1450,1360", "870,1090 930,1110 990,1110 1020,1000 1060,1090 1140,1110", "1200,1545 1280,1490 1380,1480 1500,1440", "1350,210 1460,220 1540,200",
  "1090,200 1050,190 1010,205", "1180,380 1190,450 1180,520",
];

// Adds small kinks to a boundary so that it reads as a natural line.
const rugged = (list: string[], amount: number) => {
  let s = 5;
  const rnd = () => {
    s = (s * 16807) % 2147483647;
    return s / 2147483647 - 0.5;
  };
  return list
    .map((line) => {
      const p = line.split(" ").map((q) => q.split(",").map(Number));
      let d = `M${p[0]}`;
      for (let i = 1; i < p.length; i++) {
        const [ax, ay] = p[i - 1];
        const [bx, by] = p[i];
        const n = Math.max(1, Math.round(Math.hypot(bx - ax, by - ay) / 12));
        for (let k = 1; k < n; k++) {
          d += `L${(ax + ((bx - ax) * k) / n + rnd() * amount).toFixed(1)} ${(ay + ((by - ay) * k) / n + rnd() * amount).toFixed(1)}`;
        }
        d += `L${bx} ${by}`;
      }
      return d;
    })
    .join("");
};

// Rounds off the corners of each hand-placed line.
const smooth = (list: string[]) =>
  list
    .map((s) => {
      const p = s.split(" ").map((q) => q.split(",").map(Number));
      let d = `M${p[0]}`;
      for (let i = 1; i < p.length - 1; i++) {
        d += `Q${p[i]} ${(p[i][0] + p[i + 1][0]) / 2},${(p[i][1] + p[i + 1][1]) / 2}`;
      }
      return d + `L${p[p.length - 1]}`;
    })
    .join("");

type Label = [string, number, number, number];
const REGIONS: Label[] = [
  ["FRANCE", 515.5, 107.3, 59], ["NORMANDY", 370.5, 184.7, 87], ["BRITTANY", 204, 250, 71], ["PAYS DE LA", 312, 291, 82], ["LOIRE", 332, 308, 42],
  ["CENTRE-", 459.5, 290.7, 63], ["VAL DE", 467, 308, 50], ["LOIRE", 469, 325.7, 44], ["ÎLE-DE-", 520.7, 210, 51], ["FRANCE", 517.7, 227, 58],
  ["SAARLAND", 733.5, 158.6, 80.5], ["GRAND EST", 686, 232.9, 84], ["BADEN-", 858, 219, 57.5], ["WÜRTTEMBERG", 828.6, 236, 116.5], ["BAVARIA", 982.5, 194, 64.5],
  ["TRENTINO –", 966, 379, 84.5], ["ALTO ADIGE/", 962, 396.4, 92.5], ["SÜDTIROL", 972, 413.6, 72.5], ["FRIULI –", 1076.7, 401, 55], ["VENEZIA", 1072, 418.6, 64], ["GIULIA", 1080, 436, 48],
  ["VENETO", 1010, 458, 59], ["VALLE", 775.5, 442, 43.5], ["D'AOSTA", 766, 459.6, 62], ["LOMBARDY", 884.5, 464, 83.5], ["PIEMONTE", 788, 503, 77], ["LIGURIA", 839.6, 548, 58],
  ["EMILIA-", 967.8, 534.6, 54.6], ["ROMAGNA", 956, 552.5, 78], ["AUVERGNE-", 606.7, 468.3, 86], ["RHÔNE-", 621.7, 485.7, 57], ["ALPES", 627, 502.7, 45],
  ["PROVENCE-", 682.7, 562.3, 85.3], ["ALPES-CÔTE", 681, 579.7, 89], ["D'AZUR", 699, 597, 53.7], ["BOURGOGNE-", 622, 331.3, 100], ["FRANCHE-", 635, 348, 71.7], ["COMTÉ", 646, 365.7, 51.7],
  ["NOUVELLE-", 376.7, 468, 82.3], ["AQUITAINE", 378, 485.7, 79],
];
const COUNTRIES: Label[] = [
  ["LUXEMBOURG", 674.7, 122, 109], ["AUSTRIA", 1126, 305, 71.5], ["LIECHTENSTEIN", 854, 341, 121], ["SWITZERLAND", 782.5, 368, 121], ["SLOVENIA", 1160, 421.8, 78],
  ["CROATIA", 1211, 480, 86], ["CHIA", 1235, 128.5, 46], ["SAN", 1056.7, 580.7, 30.5], ["MARINO", 1040, 598, 62], ["FRANCE", 462.7, 385, 76.5],
];
const CITIES: Label[] = [
  ["Luxembourg", 650, 138.7, 75.7], ["Nuremberg", 924.5, 151.8, 69], ["Munich", 975.5, 260, 44.5], ["Zurich", 817.5, 321, 38.5], ["Zagreb", 1216, 445, 42], ["Venice", 1022, 473, 39],
  ["GENEVA", 666, 415.7, 60.7], ["Lyon", 627.4, 449, 28], ["Limoges", 412.4, 443, 50.3], ["Bordeaux", 305.4, 519.5, 57], ["La Rochelle", 263, 417.3, 68.5], ["Rennes", 258.7, 261.7, 44.5],
  ["Le Havre", 349.4, 148, 50], ["Frankfurt", 808.6, 97, 55], ["Prague", 1132.3, 99, 43],
];
const DOTS = [[730, 133.7], [997.5, 148], [1023.4, 256], [859, 317], [1065, 469], [730, 409.5], [658, 444], [466, 438], [365.7, 514], [335, 413.3], [306.5, 257.3], [403, 144.3], [1178, 95.5]];

const Labels = ({ items, fill, size, weight }: { items: Label[]; fill: string; size: number; weight: number }) => (
  <g
    fill={fill}
    fontSize={size}
    fontWeight={weight}
    fontFamily="Inter, sans-serif"
    stroke="#fcf9f5"
    strokeOpacity="0.8"
    strokeWidth="2"
    paintOrder="stroke"
    strokeLinejoin="round"
  >
    {items.map(([t, x, y, w]) => (
      <text key={t + x} x={x} y={y} textLength={w} lengthAdjust="spacingAndGlyphs">
        {t}
      </text>
    ))}
  </g>
);

const Pin = ({ x, y }: { x: number; y: number }) => (
  <g transform={`translate(${x} ${y})`}>
    <rect x="-1" y="0" width="2" height="18.5" fill="#111" />
    <circle r="4" fill="#000" />
    <circle cx="1.2" cy="-1.2" r="1" fill="#ddd" />
  </g>
);

function BaseMap() {
  return (
    <svg width="1225" height="500" viewBox="23 95 1225 500">
      <defs>
        <clipPath id="land"><path d={LAND} /></clipPath>
        <filter id="shore" x="-5%" y="-5%" width="110%" height="110%"><feGaussianBlur stdDeviation="2.5" /></filter>
      </defs>
      <path d={LAND + AQUA_ISLANDS} fill="none" stroke="#bfd9df" strokeWidth="3" filter="url(#shore)" />
      <path d={LAND + AQUA_ISLANDS} fill="#fbf8f3" stroke="#e9efec" strokeWidth="0.6" />
      <path d="M335,470 333,476 334,484Z M334,488 332,496 335,500Z M334,520 342,527 334,532Z M333,540 338,544 333,548Z" fill="#cfe4ea" />
      <g clipPath="url(#land)" fill="none" strokeLinejoin="round">
        <path d="M1054,498 1075,498 1076,510 1062,516 1052,508Z" fill="#f0f1e5" />
        <g transform="translate(0 80) scale(.4018 .3333)">
          <path d={rugged(BORDERS_WEST, 9)} stroke="#efdfe6" strokeWidth="1.1" vectorEffect="non-scaling-stroke" />
          <path d={rugged(STREAMS_WEST, 9)} stroke="#d2e6ea" strokeWidth="1" vectorEffect="non-scaling-stroke" />
          <path d={smooth(ROADS_WEST)} stroke="#fde5c0" strokeWidth="1.2" vectorEffect="non-scaling-stroke" />
        </g>
        <g transform="translate(620 80) scale(.4082 .3571)">
          <path d={rugged(BORDERS_WIDE, 12)} stroke="#f8f1f0" strokeWidth="6" vectorEffect="non-scaling-stroke" />
          <path d={rugged(BORDERS_WIDE, 12)} stroke="#ecd8de" strokeWidth="1.5" vectorEffect="non-scaling-stroke" />
          <path d={rugged(BORDERS_THIN, 9)} stroke="#efdfe6" strokeWidth="1.1" vectorEffect="non-scaling-stroke" />
          <path d={rugged(STREAMS_EAST, 9)} stroke="#d2e6ea" strokeWidth="1" vectorEffect="non-scaling-stroke" />
          <path d={smooth(ROADS_EAST)} stroke="#fde5c0" strokeWidth="1.2" vectorEffect="non-scaling-stroke" />
          <path d={LAKES.split("|").map((s) => "M" + s + "Z").join("")} fill="#cbe2e8" />
        </g>
      </g>
      <path d="M397.5,95V595M23,191.5H1248M23,495.5H1248M704.5,95V595M1006.5,95V595" stroke="#e8e8e4" strokeWidth="0.5" opacity="0.6" />
      <Labels items={COUNTRIES} fill="#a8b0be" size={14.5} weight={500} />
      <Labels items={REGIONS} fill="#8492a7" size={14.5} weight={600} />
      <Labels items={CITIES} fill="#456080" size={12.5} weight={700} />
      <Labels items={[["VIENNA", 1223, 255, 60]]} fill="#456080" size={15} weight={700} />
      <g fill="#3d5a7c">
        {DOTS.map(([x, y]) => (
          <rect key={x} x={x - 2} y={y - 2} width="4" height="4" />
        ))}
      </g>
      <text x="869" y="599" fill="#fff" fontFamily="Inter, sans-serif" fontStyle="italic" fontWeight="600" fontSize="15">Mar</text>
      <g transform="translate(280 90) scale(.3333)"><Rivers net={NORTH} seed={7} /></g>
      <g transform="translate(280 340) scale(.3333)"><Rivers net={SOUTH} seed={31} /></g>
      <Pin x={402} y={308.5} />
      <Pin x={511} y={372.5} />
    </svg>
  );
}

/* ---------- longitudinal chart ---------- */

const BAND: Record<string, string> = {
  F: "#afc6bc", P: "#d8f1d4", Y: "#fff099", R: "#e5a4a7", W: "#fcfcff", f: "#c5dccb", w: "#edf8ee", r: "#e3bfae",
};

// Land-use bands: letter of the class and the position where it begins.
const BANDS: { from: number; scale: number; end: number; list: string }[] = [
  {
    from: 0, scale: 0.40816, end: 1519,
    list: "F180 P197 F201 P205 F210 P229 F251 P265 Y272 F282 P287 Y316 P344 F355 Y360 P368 W377 F380 W383 F385 W390 F419 P433 F440 P442 F451 P475 f478 P481 F492 P507 R513 P520 F523 P531 F546 P564 F566 P568 F571 f603 F608 P630 F637 P666 F671 P691 F706 R751 w755 R757 W773 f775 F779 P828 R834 F843 W848 F858 P860 R866 F877 P904 F907 R924 P928 R930 w932 R934 P936 F941 P945 F947 P962 F966 P980 F983 R987 F990 P1012 F1014 R1041 f1045 F1050 Y1076 F1086 P1092 R1107 P1110 F1116 W1121 F1124 P1134 Y1137 F1143 P1146 R1149 F1151 P1155 F1157 f1172 F1175 P1183 w1198 Y1203 P1208 Y1220 P1228 F1240 P1243 F1247 W1250 F1260 P1270 R1296 F1322 P1333 Y1380 P1383 W1387 P1392 w1398 P1405 Y1415 F1421 P1423 F1425 P1428 W1468 P1472 w1479 P1482",
  },
  {
    from: 620, scale: 1 / 3, end: 1380,
    list: "P0 F24 P39 w51 P57 F84 P90 w100 P104 W138 P147 W153 P159 w171 P177 W180 P186 w207 P213 R228 f231 Y234 F237 W240 R243 P246 F261 Y264 P269 F300 P305 W324 P330 W441 P444 f465 P471 Y475 f486 P492 Y501 F507 P516 F519 w543 f546 w549 P556 F567 P573 F579 W585 w594 W600 w609 F615 P631 F639 W645 w651 F657 f666 F672 P681 F715 P721 R728 F754 P763 F768 P780 F783 Y832 F841 Y849 W856 F864 Y870 F887 P891 Y906 F909 Y917 P922 w939 P942 W951 F957 P975 F991 W1005 F1011 Y1015 W1026 P1029 R1042 F1047 Y1050 F1062 W1074 F1077 w1080 F1085 P1088 F1092 f1098 Y1107 F1116 w1125 F1128 P1138 F1149 P1152 F1182 P1185 F1191 P1194 R1221 F1227 R1236 F1248 R1254 F1267 W1272 R1275 P1278 R1293 P1305 r1326 P1331",
  },
  {
    from: 1080, scale: 1 / 3, end: 1200,
    list: "P0 F12 P18 F35 P42 f64 P70 Y94 W97 Y99 P114 F123 P126 F132 Y137 R160 P165 F168 P171 R180 P190 r195 P201 Y252 F254 P276 w330 P333 F345 P355 f363 P367 F402 P405 w417 P423 w546 F551 P555 F564 P568 F597 P600 w621 P624 r650 P654 F687 R691 P706 f732 P738 w758 P763 w777 P783 F840 P848 F966 P995 F999 P1001 F1005 P1008 f1017 P1023 F1035 P1050 F1070 P1083 F1086 P1089 F1093 P1096 F1101 P1104 F1110 P1113 F1122 R1152 f1156 P1158 w1178 P1191",
  },
];

const PROFILE = [
  "M160,780 L196,778", "M200,778 L232,774", "M235,774 L265,769", "M284,768 L316,764", "M320,763 l3,0", "M338,763 L402,752", "M412,752 l2,0", "M422,751 L473,746", "M490,743 l2,0", "M497,741 L526,737",
  "M530,735 l8,-2", "M545,731 l4,-1", "M569,727 L655,706", "M660,705 l2,-1", "M667,703 L680,698", "M691,692 L700,687 718,683 722,675 727,675", "M731,673 L740,674", "M746,671 L758,667", "M763,665 L773,662",
  "M780,661 L790,657", "M796,657 L825,645", "M828,643 L838,639 843,633 850,633 880,621", "M895,614 l3,-1", "M903,611 L925,602 940,592 946,583 951,553", "M952,579 L960,576 972,565 985,560 987,557", "M985,560 l5,1 L1000,551",
  "M1012,546 L1020,534 1027,526", "M1033,520 L1036,488", "M1042,486 L1045,488 1049,500 1058,494 1062,479 1075,476 1085,455 1105,430 1109,419 1117,411", "M1120,402 L1125,388", "M1130,380 L1134,372 1143,352 1147,351 1152,349", "M1171,304 l4,-3", "M1191,240 l1,-10",
];

function Chart() {
  return (
    <svg width="1537" height="400" viewBox="23 729 1537 400">
      <g shapeRendering="crispEdges">
        <rect x="73.5" y="749" width="1406.5" height="400" fill="#d8f1d4" />
        {BANDS.map(({ from, scale, end, list }) => {
          const items = list.split(" ").map((s) => [s[0], Number(s.slice(1))] as [string, number]);
          return items.map(([c, x], i) => {
            const next = i + 1 < items.length ? items[i + 1][1] : end;
            const start = Math.round(from + x * scale);
            const stop = Math.max(start + 1, Math.round(from + next * scale));
            return <rect key={`${from}-${x}`} x={start} y="749" width={stop - start} height="400" fill={BAND[c]} />;
          });
        })}
        {[798, 864, 930].map((y) => (
          <rect key={y} x="73.5" y={y} width="1406.5" height="1" fill="#ededf0" />
        ))}
      </g>
      <g fill="#444" fontFamily="Open Sans, sans-serif">
        {[[400, 803], [300, 869], [200, 935]].map(([v, y]) => (
          <text key={v} x="72" y={y} fontSize="12" textAnchor="end">{v}</text>
        ))}
        <text transform="translate(38 814) rotate(-90)" fontSize="14" textAnchor="end">Elévation (m) - Elévation (m)</text>
      </g>
      <g transform="translate(1080 700) scale(.3333)" fill="none" stroke="#22223b" strokeWidth="6" strokeLinejoin="round">
        <path d={PROFILE.join("")} />
      </g>
    </svg>
  );
}

/* ---------- logos ---------- */

const Logos = () => (
  <svg width="212" height="73" viewBox="0 1 212 73">
    <path d="M0 1H6Q1 1 0 6Z" fill="#55555c" />
    <g fill="none" stroke="#3f78cf" strokeLinecap="round">
      <path d="M12.5 32C13 25 14 18 18 12C19 17 20 21 20.5 24C22 18 24 12 28.5 9.5" strokeWidth="1.3" />
      <path d="M29 9.5C25 17 22 29 24 42C26 54 31 63 39 64.5" strokeWidth="1.9" />
      <path d="M38 64C47 65 60 66 65 61" strokeWidth="2.8" />
      <path d="M64 61.5C71 57 70 48 65 46.5C58 45 53 52 54.5 57.5" strokeWidth="1.8" />
    </g>
    <g fill="#3f78cf" fontFamily="Open Sans, sans-serif" fontSize="14" fontStyle="italic">
      <text transform="translate(25 34) rotate(8)">a</text>
      <text transform="translate(35 43) rotate(14)">p</text>
      <text transform="translate(44 51) rotate(14)">d</text>
    </g>
    <path d="M83 12 95 10.5 97 64 83 60Z" fill="#858585" />
    <path d="M95 10.5 114 14V53L107 54V62L97 64Z" fill="#0a0a0a" />
    <path d="M88 14h3v9h-3z" fill="#222" />
    <path d="M83 27 87 24 90 28 93 22 96 21 96 42 92 38 91 45 87 39 83 40Z M86 47 90 51 95 45 96 60 92 55 88 56Z" fill="#97c11f" />
    <path d="M101 27q3-6 5-3t5-5M102 33q4-4 6-1t5-4M101 39q5-2 6-6t6 2M103 45q2-6 5-3t4-5M104 50q2-5 5-2t3-6M107 19q2 2 5-1" fill="none" stroke="#97c11f" strokeWidth="1.1" />
    <g fontFamily="Open Sans, sans-serif" fontWeight="700">
      <g fontSize="17">
        <text x="116" y="27" textLength="7" lengthAdjust="spacingAndGlyphs" fill="#333">E</text>
        <text x="123" y="27" textLength="7" lengthAdjust="spacingAndGlyphs" fill="#97c11f">V</text>
        <text x="130" y="27" textLength="6.5" lengthAdjust="spacingAndGlyphs" fill="#888">S</text>
      </g>
      <text x="117" y="30.5" fontSize="3" textLength="19" fill="#111">Environnement</text>
      <text x="117" y="34" fontSize="3" textLength="18" fill="#111">Ville Société</text>
      <circle cx="126.5" cy="46.5" r="9.6" fill="#17284d" />
      <text x="118.5" y="50" fontSize="11" fontWeight="400" textLength="16" lengthAdjust="spacingAndGlyphs" fill="#fff">cnrs</text>
      <text x="117" y="64.5" fontSize="5" textLength="19" lengthAdjust="spacingAndGlyphs" fill="#111">UMR 5600</text>
    </g>
    <clipPath id="globe"><circle cx="173.5" cy="24.5" r="13" /></clipPath>
    <g clipPath="url(#globe)">
      <rect x="160" y="11" width="27" height="27" fill="#0f4288" />
      <path d="M160 25C168 26 172 14 187 16V38H160Z" fill="#2aa3de" />
      <path d="M160 26C171 27 177 18 187 19V38H160Z" fill="#8ed3f2" />
      <path d="M160 26C172 27 179 24 187 23V38H160Z" fill="#098a45" />
      <path d="M160 26C172 29 175 26 187 33V38H160Z" fill="#b6d992" />
    </g>
    <g fill="#123d7c" fontFamily="Open Sans, sans-serif" fontWeight="800">
      <text x="154.5" y="52.5" fontSize="16.5" textLength="38" lengthAdjust="spacingAndGlyphs">OFB</text>
      <text x="157" y="58" fontSize="3.6" textLength="33" lengthAdjust="spacingAndGlyphs">OFFICE FRANÇAIS</text>
      <text x="155" y="61.8" fontSize="3.6" textLength="37" lengthAdjust="spacingAndGlyphs">DE LA BIODIVERSITÉ</text>
    </g>
  </svg>
);

const CLASSES = [
  "Ordre de Strahler", "Topographie", "Utilisation dominante des sols", "Pression urbaine", "Pression agricole",
  "Utilisation naturelle des sols", "Présence de bancs sédimentaires", "Confinement de la bande active", "Connectivité des habitats riverains",
];

const LEGEND = [["Forêt", "#2d7358"], ["Prairies", "#9bdd90"], ["Cultures", "#ffe100"], ["Espaces construits", "#cb181d"]];

export default function App() {
  return (
    <Page>
      <GlobalStyle />
      <Header>
        <Logos />
        <Nav>
          <NavItem $active><FaRegCompass size={16} />Exploration &amp; Classification</NavItem>
          <NavItem $gap={6}><FaMagnifyingGlassChart size={16} />Analyse</NavItem>
          <NavItem $gap={6}><FaDownload size={16} />Télechargement</NavItem>
          <NavItem $gap={7}><FaInfo size={16} />Informations</NavItem>
        </Nav>
        <HelpButton><BsQuestionCircle size={16} />Aide</HelpButton>
      </Header>

      <Content>
        <TopRow>
          <div>
            <MapBox>
              <BaseMap />
              <Controls>
                <Bar>
                  <ControlButton $line>
                    <svg width="12" height="12" viewBox="0 0 12 12"><path d="M6 0V12M0 6H12" stroke="#000" strokeWidth="2" /></svg>
                  </ControlButton>
                  <ControlButton>
                    <svg width="12" height="12" viewBox="0 0 12 12"><path d="M0 6H12" stroke="#000" strokeWidth="2" /></svg>
                  </ControlButton>
                </Bar>
                <Bar>
                  <ControlButton>
                    <svg width="16" height="16" viewBox="0 0 16 16"><path d="M5.5 1H1V5.5M10.5 1H15V5.5M1 10.5V15H5.5M15 10.5V15H10.5" fill="none" stroke="#333" strokeWidth="2" /></svg>
                  </ControlButton>
                </Bar>
                <Bar>
                  <ControlButton>
                    <svg width="17" height="17" viewBox="0 0 17 17"><circle cx="6.8" cy="6.8" r="5.3" fill="none" stroke="#111" strokeWidth="2.3" /><path d="M10.5 10.5 15.8 15.8" stroke="#111" strokeWidth="3.4" /></svg>
                  </ControlButton>
                </Bar>
                <Bar $w={30}>
                  <ControlButton $h={26}>
                    <svg width="24" height="24" viewBox="-1 -2 22 22"><circle cx="11" cy="10" r="8.8" fill="none" stroke="#000" strokeWidth="1.6" /><path d="M11 0V6M11 14V20M1 10H7M15 10H21" stroke="#000" strokeWidth="1.8" /></svg>
                  </ControlButton>
                </Bar>
                <Ign><IgnName>I<i>G</i>N</IgnName><span>REMONTER</span><span>LE TEMPS</span></Ign>
              </Controls>
              <Layers>
                <svg width="28" height="28" viewBox="0 0 28 28">
                  <path d="M14 12 27 19 14 26.5 1 19Z" fill="#a5a5a5" stroke="#fff" strokeWidth="0.6" />
                  <path d="M14 8 27 15 14 22.5 1 15Z" fill="#a0a0a0" stroke="#fff" strokeWidth="0.8" />
                  <path d="M14 2 27 10 14 18.5 1 10Z" fill="#d4d4d4" stroke="#fff" strokeWidth="0.8" />
                </svg>
              </Layers>
              <Legend>
                Utilisation dominante des sols
                {LEGEND.map(([name, color]) => (
                  <LegendItem key={name}>
                    <svg width="13" height="14" viewBox="0 0 13 14"><path d="M0.5 13.5 12.5 0.5" stroke={color} strokeWidth="1.3" /></svg>
                    {name}
                  </LegendItem>
                ))}
              </Legend>
              <ScaleBar>100 km</ScaleBar>
              <Attribution>
                <a>Leaflet</a> | © <a>OpenStreetMap</a> contributors © <a>CARTO</a>, CNRS - EVS
              </Attribution>
            </MapBox>
            <SelectionRow>
              <span>Bassin : Loire-Bretagne | Région : la loire de sa source à la vienne (nc) | Axe : l'Indre (Ordre de Strahler : 4)</span>
              <Button>Désélectionner</Button>
            </SelectionRow>
          </div>

          <div>
            <Tabs>
              <Tab $active>Classes proposées</Tab>
              <Tab>Classification manuelle</Tab>
            </Tabs>
            <Table>
              <Row $head><span /><span />Classification</Row>
              {CLASSES.map((name, i) => (
                <Row key={name}><Radio $on={i === 2} /><Expander />{name}</Row>
              ))}
            </Table>
          </div>
        </TopRow>

        <Rule $top={16} $bottom={16} />

        <Tabs>
          <Tab $active>Évolution longitudinale</Tab>
          <Tab>Profil transversal</Tab>
        </Tabs>

        <BottomRow>
          <ChartPanel><Chart /></ChartPanel>
          <Side>
            <FieldLabel>Métrique :</FieldLabel>
            <Field><Select>Elévation (m)</Select><BsInfoCircle size={16} /></Field>
            <FieldLabel>2éme métrique :</FieldLabel>
            <Field><Select>aucun</Select><BsInfoCircle size={16} /></Field>
            <Rule $top={26} $bottom={16} />
            <CheckRow><Check />Obstacles à l'Ecoulement</CheckRow>
          </Side>
        </BottomRow>
      </Content>
    </Page>
  );
}
